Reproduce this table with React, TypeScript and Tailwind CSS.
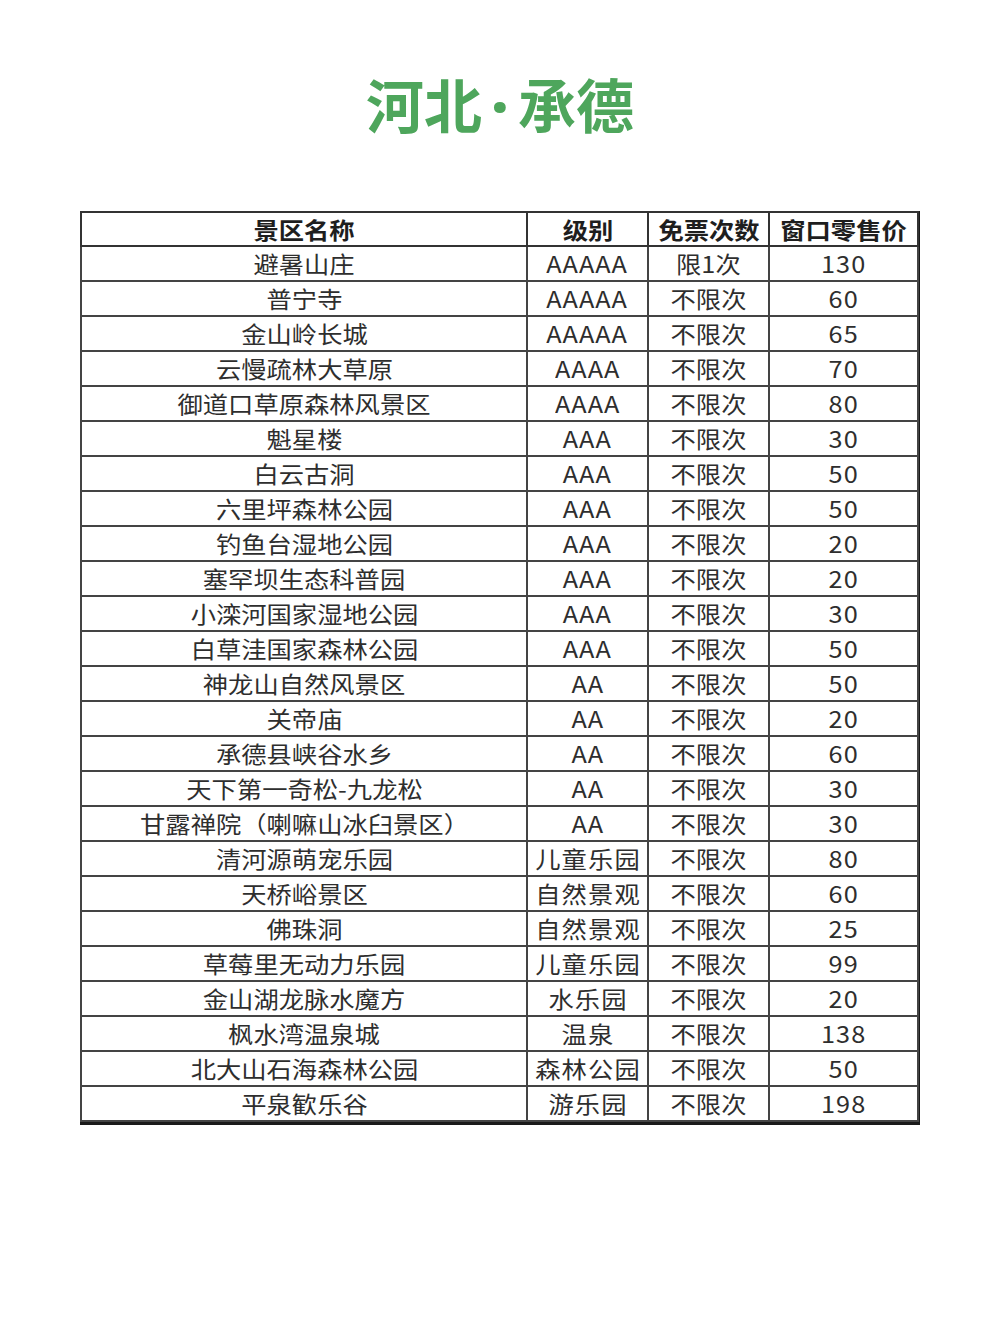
import React from "react";

const rows: [string, string, string, string][] = [
  ["避暑山庄", "AAAAA", "限1次", "130"],
  ["普宁寺", "AAAAA", "不限次", "60"],
  ["金山岭长城", "AAAAA", "不限次", "65"],
  ["云慢疏林大草原", "AAAA", "不限次", "70"],
  ["御道口草原森林风景区", "AAAA", "不限次", "80"],
  ["魁星楼", "AAA", "不限次", "30"],
  ["白云古洞", "AAA", "不限次", "50"],
  ["六里坪森林公园", "AAA", "不限次", "50"],
  ["钓鱼台湿地公园", "AAA", "不限次", "20"],
  ["塞罕坝生态科普园", "AAA", "不限次", "20"],
  ["小滦河国家湿地公园", "AAA", "不限次", "30"],
  ["白草洼国家森林公园", "AAA", "不限次", "50"],
  ["神龙山自然风景区", "AA", "不限次", "50"],
  ["关帝庙", "AA", "不限次", "20"],
  ["承德县峡谷水乡", "AA", "不限次", "60"],
  ["天下第一奇松-九龙松", "AA", "不限次", "30"],
  ["甘露禅院（喇嘛山冰臼景区）", "AA", "不限次", "30"],
  ["清河源萌宠乐园", "儿童乐园", "不限次", "80"],
  ["天桥峪景区", "自然景观", "不限次", "60"],
  ["佛珠洞", "自然景观", "不限次", "25"],
  ["草莓里无动力乐园", "儿童乐园", "不限次", "99"],
  ["金山湖龙脉水魔方", "水乐园", "不限次", "20"],
  ["枫水湾温泉城", "温泉", "不限次", "138"],
  ["北大山石海森林公园", "森林公园", "不限次", "50"],
  ["平泉歓乐谷", "游乐园", "不限次", "198"],
];

const font = { fontFamily: '"Noto Sans CJK SC", "Noto Sans", sans-serif' };
const headers = ["景区名称", "级别", "免票次数", "窗口零售价"];

export default function App() {
  return (
    <div className="w-[1000px] h-[1333px] bg-white" style={font}>
      <div className="pt-[70px] h-[211px]">
        <h1 className="h-[66px] text-center text-[58px] leading-[66px] font-bold text-[#4ea65c]">
          河北
          <span className="inline-block w-[36px] text-center font-['Noto_Sans',sans-serif] font-black leading-none">
            ·
          </span>
          承德
        </h1>
      </div>
      <div className="ml-[80px] w-[840px] border-r-[3px] border-b-[3px] border-[#1a1a1a]">
        <table className="w-[837px] table-fixed border-collapse text-[#2e2e2e]">
          <colgroup>
            <col className="w-[446px]" />
            <col className="w-[121px]" />
            <col className="w-[121px]" />
            <col className="w-[149px]" />
          </colgroup>
          <thead>
            <tr className="h-[34px] text-[23px] font-bold text-[#1e1e1e]">
              {headers.map((h) => (
                <th key={h} className="border-2 border-[#333] p-0 leading-none">
                  <span className="inline-block scale-x-[1.1]">{h}</span>
                </th>
              ))}
            </tr>
          </thead>
          <tbody>
            {rows.map((r, i) => (
              <tr key={i} className="h-[35px] text-[23px]">
                {r.map((c, j) => (
                  <td
                    key={j}
                    className="border-2 border-[#444] p-0 text-center leading-none whitespace-nowrap"
                  >
                    <span
                      className={
                        j === 1 || j === 3
                          ? "inline-block scale-x-[1.1] tracking-[1px]"
                          : "inline-block scale-x-[1.1]"
                      }
                    >
                      {c}
                    </span>
                  </td>
                ))}
              </tr>
            ))}
          </tbody>
        </table>
      </div>
    </div>
  );
}
